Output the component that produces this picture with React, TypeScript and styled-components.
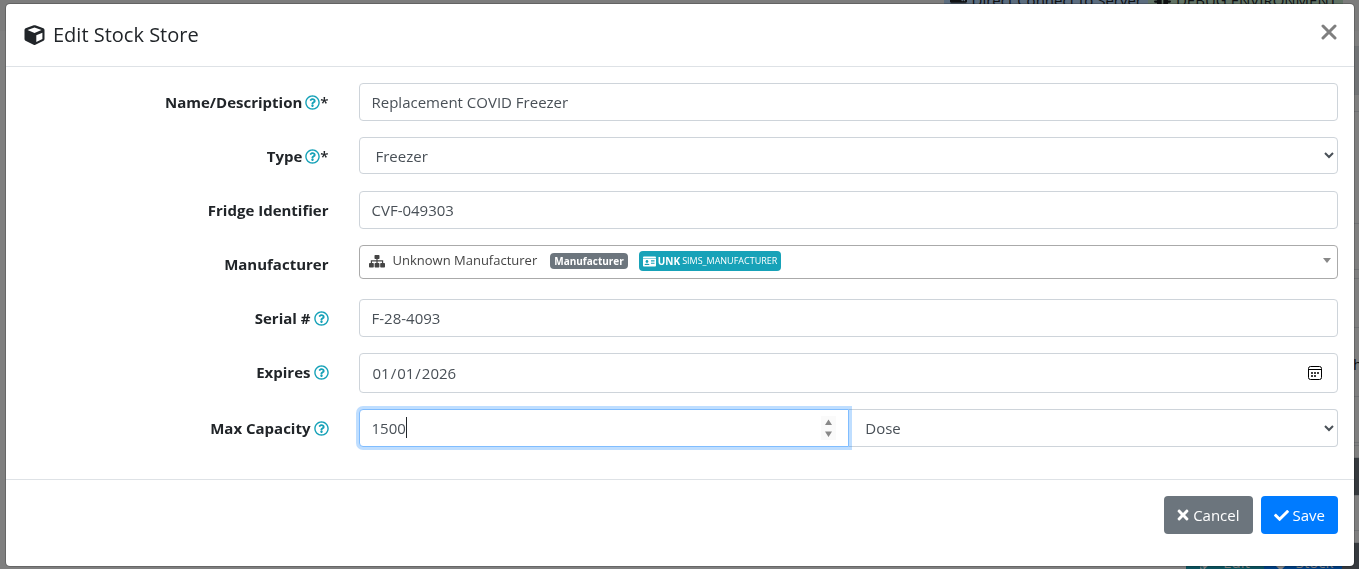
import React, { useState } from "react";
import styled, { createGlobalStyle } from "styled-components";
import {
  FaCheck,
  FaIdCard,
  FaBug,
  FaServer,
  FaPencilAlt,
  FaRegQuestionCircle,
  FaTag,
  FaTimes,
} from "react-icons/fa";

const GlobalStyle = createGlobalStyle`
  *, *::before, *::after { box-sizing: border-box; }
  body {
    margin: 0;
    background: #fff;
    color: #212529;
    font-family: "Segoe UI", "Open Sans", "Noto Sans", sans-serif;
    font-size: 15px;
    line-height: 24px;
  }
  button, input, select { font: inherit; }
`;

const Page = styled.div`
  display: flex;
  flex-direction: column;
  height: 100vh;
  overflow: hidden;
`;

const TopBar = styled.div`
  display: flex;
  justify-content: flex-end;
  flex: none;
  height: 31px;
  padding-right: 16px;
  background: #f8f8f8;
`;

const EnvBadge = styled.div<{ $tone: string }>`
  display: flex;
  align-items: center;
  gap: 5px;
  height: 24px;
  margin-top: -12px;
  padding: 0 6px;
  background: ${(p) => p.$tone};
  white-space: nowrap;
`;

const Strip = styled.div<{ $height: number; $fill?: string }>`
  flex: none;
  align-self: flex-end;
  width: 6px;
  height: ${(p) => p.$height}px;
  background: ${(p) => p.$fill ?? "#fff"};
  border-bottom: 1px solid #dee2e6;
  white-space: nowrap;
`;

const StripText = styled.div`
  padding-top: 24px;
`;

const PageActions = styled.div`
  display: flex;
  justify-content: flex-end;
  flex: none;
  height: 38px;
  padding-right: 17px;
  background: linear-gradient(to right, #fff calc(100% - 17px), #6c757d 0);
`;

const PageButton = styled.div<{ $fill: string }>`
  display: flex;
  align-items: center;
  justify-content: center;
  gap: 8px;
  width: 78px;
  height: 38px;
  background: ${(p) => p.$fill};
  color: #fff;
`;

const Backdrop = styled.div`
  position: fixed;
  inset: 0;
  padding: 3px 4px 0 5px;
  background: rgba(0, 0, 0, 0.5);
`;

const Dialog = styled.form`
  background: #fff;
  background-clip: padding-box;
  border: 1px solid rgba(0, 0, 0, 0.2);
  border-radius: 5px;
`;

const Header = styled.header`
  display: flex;
  align-items: center;
  justify-content: space-between;
  padding: 16px;
  border-bottom: 1px solid #dee2e6;
`;

const Title = styled.h1`
  display: flex;
  align-items: center;
  gap: 8px;
  margin: 0;
  padding-left: 2px;
  font-size: 20px;
  font-weight: 400;
  line-height: 30px;
`;

const CloseButton = styled.button`
  display: flex;
  width: 18px;
  height: 24px;
  padding: 1px;
  border: 0;
  background: none;
  color: #7f7f7f;
`;

const Body = styled.div`
  display: flex;
  flex-direction: column;
  gap: 16px;
  padding: 16px 16px 32px;
`;

const Row = styled.div`
  display: flex;
  min-height: 38px;
  margin: 0 -15px;
`;

const LabelCell = styled.div`
  display: flex;
  align-items: flex-start;
  justify-content: flex-end;
  flex: 0 0 25%;
  padding: 7px 15px 0;
  font-weight: 700;
`;

const HelpIcon = styled(FaRegQuestionCircle)`
  width: 15px;
  height: 15px;
  margin: 5px 0 0 3px;
  color: #17a2b8;
`;

const RequiredMark = styled.span`
  font-weight: 600;
`;

const FieldCell = styled.div`
  position: relative;
  display: flex;
  align-items: flex-start;
  flex: 1;
  min-width: 0;
  padding: 0 15px;
`;

const Input = styled.input<{ $height?: number }>`
  width: 100%;
  height: ${(p) => p.$height ?? 38}px;
  padding: 6px 12px;
  border: 1px solid #ced4da;
  border-radius: 4px;
  background: #fff;
  color: #495057;
  outline: none;

  &::-webkit-calendar-picker-indicator {
    opacity: 0;
  }
`;

const NumberInput = styled(Input)`
  border-color: #80bdff;
  border-radius: 4px 0 0 4px;
  box-shadow: 0 0 0 3px rgba(0, 123, 255, 0.25);
  caret-color: transparent;

  &::-webkit-inner-spin-button {
    opacity: 0;
  }
`;

const NumberBox = styled.div`
  position: relative;
  z-index: 1;
  display: flex;
  flex: 0 0 calc(50% + 1px);
`;

const Caret = styled.span`
  position: absolute;
  top: 8px;
  left: 47px;
  width: 1px;
  height: 21px;
  background: #212529;
`;

const SpinArrows = styled.svg`
  position: absolute;
  top: 7px;
  right: 13px;
  width: 15px;
  height: 24px;
  background: #fafafa;
  pointer-events: none;
`;

const Select = styled.select<{ $height: number; $joined?: boolean }>`
  flex: 1;
  min-width: 0;
  height: ${(p) => p.$height}px;
  padding: 6px 0 6px 12px;
  border: 1px solid #ced4da;
  border-left-width: ${(p) => (p.$joined ? 0 : 1)}px;
  border-radius: ${(p) => (p.$joined ? "0 4px 4px 0" : "4px")};
  background: #fff;
  color: #495057;
`;

const CalendarIcon = styled.svg`
  position: absolute;
  top: 13px;
  right: 30px;
  width: 15px;
  height: 15px;
  pointer-events: none;
`;

const PickerButton = styled.button`
  display: flex;
  align-items: center;
  width: 100%;
  height: 34px;
  padding: 0 6px 2px 9px;
  border: 1px solid #aaa;
  border-radius: 4px;
  background: #fff;
  color: #444;
  font-size: 13px;
`;

const PickerText = styled.span`
  margin: 0 13px 0 8px;
  padding-bottom: 2px;
`;

const Badge = styled.span<{ $fill: string; $height: number }>`
  display: flex;
  align-items: center;
  gap: 2px;
  height: ${(p) => p.$height}px;
  margin-right: 11px;
  padding: 0 4px;
  border-radius: 4px;
  background: ${(p) => p.$fill};
  color: #fff;
  font-size: 9px;
  line-height: 16px;

  b {
    font-size: 10px;
    font-weight: 700;
  }
`;

const PickerArrow = styled.span`
  margin-left: auto;
  margin-bottom: 2px;
  border: 4px solid transparent;
  border-top: 5px solid #888;
  border-bottom: 0;
`;

const Footer = styled.footer`
  display: flex;
  justify-content: flex-end;
  gap: 8px;
  padding: 16px 16px 32px;
  border-top: 1px solid #dee2e6;
`;

const ActionButton = styled.button<{ $fill: string }>`
  display: flex;
  align-items: center;
  gap: 4px;
  height: 38px;
  padding: 0 13px;
  border: 0;
  border-radius: 4px;
  background: ${(p) => p.$fill};
  color: #fff;
`;

const CancelIcon = styled(FaTimes)`
  width: 12px;
  height: 16px;
`;

function CubeIcon() {
  return (
    <svg width="21" height="20" viewBox="0 0 20 20" fill="currentColor" fillRule="evenodd" aria-hidden>
      <path d="M9.2 .3 Q10 0 10.8 .3 L18.9 3.3 Q20 3.8 20 5 V14 Q20 15.2 19 15.7 L10.9 19.7 Q10 20.1 9.1 19.7 L1 15.7 Q0 15.2 0 14 V5 Q0 3.8 1.1 3.3 Z M10 2.6 L3 5.1 L10 7.9 L17 5.1 Z M11.8 10.2 V17 L17.9 14 V7.7 Z" />
    </svg>
  );
}

function SitemapIcon() {
  return (
    <svg width="16" height="13" viewBox="0 0 16 13" fill="currentColor" aria-hidden>
      <rect x="5.5" y="0" width="5" height="4" rx="0.7" />
      <rect x="0" y="8" width="4.8" height="4.6" rx="0.8" />
      <rect x="5.6" y="8" width="4.8" height="4.6" rx="0.8" />
      <rect x="11.2" y="8" width="4.8" height="4.6" rx="0.8" />
      <path d="M2.4 8 V5.8 H13.6 V8 M8 4 V8" fill="none" stroke="currentColor" strokeWidth="1.2" />
    </svg>
  );
}

interface FieldProps {
  id: string;
  label: string;
  help?: boolean;
  required?: boolean;
  children: React.ReactNode;
}

function Field({ id, label, help, required, children }: FieldProps) {
  return (
    <Row>
      <LabelCell>
        <label htmlFor={id}>{label}</label>
        {help && <HelpIcon aria-hidden />}
        {required && <RequiredMark>*</RequiredMark>}
      </LabelCell>
      <FieldCell>{children}</FieldCell>
    </Row>
  );
}

function UnderlyingPage() {
  return (
    <Page aria-hidden>
      <TopBar>
        <EnvBadge $tone="#b8daff">
          <FaServer size={17} /> Direct Connect to Server
        </EnvBadge>
        <EnvBadge $tone="#c3e6cb">
          <FaBug size={17} /> DEBUG ENVIRONMENT
        </EnvBadge>
      </TopBar>
      <Strip $height={16} />
      <Strip $height={48} $fill="#e2e6ea" />
      <Strip $height={17} />
      <Strip $height={112} />
      <Strip $height={46} />
      <Strip $height={9} />
      <Strip $height={49} />
      <Strip $height={69}>
        <StripText>h</StripText>
      </Strip>
      <Strip $height={46} />
      <Strip $height={3} />
      <Strip $height={12} />
      <Strip $height={38} $fill="#6c757d" />
      <Strip $height={35} />
      <Strip $height={12} />
      <PageActions>
        <PageButton $fill="#17a2b8">
          <FaPencilAlt /> Edit
        </PageButton>
        <PageButton $fill="#007bff">
          <FaTag /> Stock
        </PageButton>
      </PageActions>
    </Page>
  );
}

export default function App() {
  const [name, setName] = useState("Replacement COVID Freezer");
  const [identifier, setIdentifier] = useState("CVF-049303");
  const [serial, setSerial] = useState("F-28-4093");
  const [expires, setExpires] = useState("2026-01-01");
  const [capacity, setCapacity] = useState("1500");

  return (
    <>
      <GlobalStyle />
      <UnderlyingPage />
      <Backdrop>
        <Dialog role="dialog" aria-labelledby="title" onSubmit={(e) => e.preventDefault()}>
          <Header>
            <Title id="title">
              <CubeIcon /> Edit Stock Store
            </Title>
            <CloseButton type="button" aria-label="Close">
              <svg width="16" height="16" viewBox="0 0 16 16" stroke="currentColor" strokeWidth="3" strokeLinecap="round">
                <path d="M2 2 L14 14 M14 2 L2 14" />
              </svg>
            </CloseButton>
          </Header>
          <Body>
            <Field id="name" label="Name/Description" help required>
              <Input id="name" value={name} onChange={(e) => setName(e.target.value)} />
            </Field>
            <Field id="type" label="Type" help required>
              <Select id="type" $height={37} defaultValue="Freezer">
                <option>Freezer</option>
                <option>Fridge</option>
              </Select>
            </Field>
            <Field id="identifier" label="Fridge Identifier">
              <Input id="identifier" value={identifier} onChange={(e) => setIdentifier(e.target.value)} />
            </Field>
            <Field id="manufacturer" label="Manufacturer">
              <PickerButton id="manufacturer" type="button" aria-haspopup="listbox">
                <SitemapIcon />
                <PickerText>Unknown Manufacturer</PickerText>
                <Badge $fill="#6c757d" $height={16}>
                  <b>Manufacturer</b>
                </Badge>
                <Badge $fill="#17a2b8" $height={20}>
                  <FaIdCard size={13} /> <b>UNK</b> SIMS_MANUFACTURER
                </Badge>
                <PickerArrow />
              </PickerButton>
            </Field>
            <Field id="serial" label="Serial #" help>
              <Input id="serial" value={serial} onChange={(e) => setSerial(e.target.value)} />
            </Field>
            <Field id="expires" label="Expires" help>
              <Input id="expires" type="date" $height={40} value={expires} onChange={(e) => setExpires(e.target.value)} />
              <CalendarIcon viewBox="0 0 15 15" fill="none" stroke="#000">
                <rect x="0.5" y="0.5" width="13" height="13" rx="2" />
                <path d="M1 3.5 H13" />
                <path d="M6 7h2M9 7h2M3 10h2M6 10h2M3 7h2" strokeWidth="1.4" />
              </CalendarIcon>
            </Field>
            <Field id="capacity" label="Max Capacity" help>
              <NumberBox>
                <NumberInput
                  id="capacity"
                  type="number"
                  value={capacity}
                  onChange={(e) => setCapacity(e.target.value)}
                />
                <Caret />
                <SpinArrows viewBox="0 0 15 24" fill="#888" aria-hidden>
                  <path d="M7.5 3.5 L11 9 H4 Z M7.5 21 L11 15.5 H4 Z" />
                </SpinArrows>
              </NumberBox>
              <Select aria-label="Capacity unit" $height={38} $joined defaultValue="Dose">
                <option>Dose</option>
                <option>Vial</option>
              </Select>
            </Field>
          </Body>
          <Footer>
            <ActionButton type="button" $fill="#6c757d">
              <CancelIcon /> Cancel
            </ActionButton>
            <ActionButton type="submit" $fill="#007bff">
              <FaCheck size={15} /> Save
            </ActionButton>
          </Footer>
        </Dialog>
      </Backdrop>
    </>
  );
}
